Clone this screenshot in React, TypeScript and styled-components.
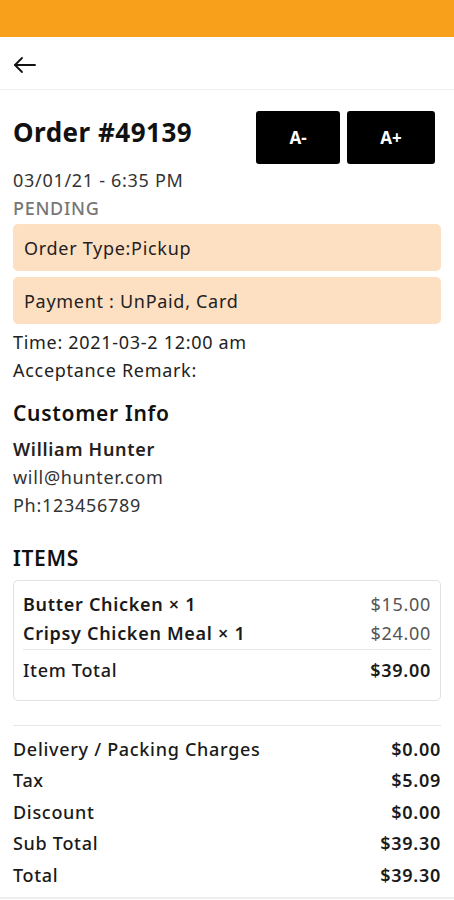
import styled, { createGlobalStyle } from "styled-components"

const GlobalStyle = createGlobalStyle`
  body {
    margin: 0;
    background: #fff;
    font-family: "Noto Sans", "Open Sans", sans-serif;
    color: #1a1a1a;
    letter-spacing: 0.7px;
  }
`

const Page = styled.div`
  width: 454px;
  min-height: 900px;
  display: flex;
  flex-direction: column;
`

const StatusBar = styled.div`
  height: 37px;
  background: #f8a01c;
`

const TopBar = styled.div`
  height: 53px;
  display: flex;
  align-items: center;
  padding: 4px 13px 0;
  box-sizing: border-box;
  border-bottom: 1px solid #f0f0f0;
`

const Content = styled.div`
  padding: 20px 13px 0;
  display: flex;
  flex-direction: column;
`

const HeadRow = styled.div`
  display: flex;
  justify-content: space-between;
  align-items: flex-start;
`

const HeadText = styled.div`
  display: flex;
  flex-direction: column;
`

const OrderTitle = styled.h1`
  margin: 6px 0 0;
  font-size: 26px;
  font-weight: 700;
  line-height: 32px;
  letter-spacing: 0.5px;
  color: #111;
`

const SizeButtons = styled.div`
  display: flex;
  gap: 7px;
  margin: 1px 6px 0 0;
`

const SizeButton = styled.button<{ $w: number }>`
  width: ${p => p.$w}px;
  height: 53px;
  background: #000;
  color: #fff;
  border: none;
  border-radius: 3px;
  font-family: inherit;
  font-size: 17px;
  font-weight: 700;
`

const Line = styled.div<{ $color?: string; $weight?: number; $top?: number }>`
  margin-top: ${p => p.$top || 0}px;
  font-size: 18px;
  line-height: 28px;
  color: ${p => p.$color || "#222"};
  font-weight: ${p => p.$weight || 400};
`

const InfoBox = styled.div<{ $top: number }>`
  margin-top: ${p => p.$top}px;
  height: 47px;
  background: #fddfc2;
  border-radius: 5px;
  display: flex;
  align-items: center;
  padding: 0 11px;
  font-size: 18px;
  color: #222;
`

const SectionTitle = styled.h2<{ $top: number; $bottom: number }>`
  margin: ${p => p.$top}px 0 ${p => p.$bottom}px;
  font-size: 21px;
  font-weight: 600;
  line-height: 28px;
  color: #111;
`

const ItemsCard = styled.div`
  border: 1.5px solid #e2e2e2;
  border-radius: 5px;
  padding: 8px 9px 15px;
  display: flex;
  flex-direction: column;
`

const Row = styled.div<{ $h: number }>`
  display: flex;
  justify-content: space-between;
  align-items: center;
  height: ${p => p.$h}px;
  font-size: 18px;
`

const Label = styled.span<{ $weight?: number }>`
  font-weight: ${p => p.$weight || 500};
  color: #1a1a1a;
`

const Value = styled.span<{ $muted?: boolean }>`
  font-weight: ${p => (p.$muted ? 400 : 600)};
  color: ${p => (p.$muted ? "#555" : "#1a1a1a")};
`

const Divider = styled.hr<{ $m: string }>`
  border: none;
  border-top: 1.5px solid #e6e6e6;
  margin: ${p => p.$m};
`

const Summary = styled.div`
  display: flex;
  flex-direction: column;
`

const BottomEdge = styled.div`
  margin-top: 6px;
  border-top: 2px solid #eee;
`

const items = [
  { name: "Butter Chicken × 1", price: "$15.00" },
  { name: "Cripsy Chicken Meal × 1", price: "$24.00" },
]

const charges = [
  { label: "Delivery / Packing Charges", value: "$0.00" },
  { label: "Tax", value: "$5.09" },
  { label: "Discount", value: "$0.00" },
  { label: "Sub Total", value: "$39.30" },
  { label: "Total", value: "$39.30" },
]

const BackArrow = () => (
  <svg width="24" height="24" viewBox="0 0 24 24" fill="none" stroke="#111" strokeWidth="1.8" strokeLinecap="round" strokeLinejoin="round">
    <path d="M22 12H2" />
    <path d="M9 5L2 12l7 7" />
  </svg>
)

const App = () => {
  return (
    <Page>
      <GlobalStyle />
      <StatusBar />
      <TopBar>
        <BackArrow />
      </TopBar>
      <Content>
        <HeadRow>
          <HeadText>
            <OrderTitle>Order #49139</OrderTitle>
            <Line $color="#333" $top={18}>03/01/21 - 6:35 PM</Line>
            <Line $color="#777" $weight={500}>PENDING</Line>
          </HeadText>
          <SizeButtons>
            <SizeButton $w={84}>A-</SizeButton>
            <SizeButton $w={88}>A+</SizeButton>
          </SizeButtons>
        </HeadRow>
        <InfoBox $top={2}>Order Type:Pickup</InfoBox>
        <InfoBox $top={6}>Payment : UnPaid, Card</InfoBox>
        <Line $top={4}>Time: 2021-03-2 12:00 am</Line>
        <Line>Acceptance Remark:</Line>

        <SectionTitle $top={15} $bottom={8}>Customer Info</SectionTitle>
        <Line $weight={600}>William Hunter</Line>
        <Line $color="#333">will@hunter.com</Line>
        <Line $color="#333">Ph:123456789</Line>

        <SectionTitle $top={25} $bottom={8}>ITEMS</SectionTitle>
        <ItemsCard>
          {items.map(item => (
            <Row $h={29} key={item.name}>
              <Label $weight={600}>{item.name}</Label>
              <Value $muted>{item.price}</Value>
            </Row>
          ))}
          <Divider $m="2px 0 5px" />
          <Row $h={30}>
            <Label>Item Total</Label>
            <Value>$39.00</Value>
          </Row>
        </ItemsCard>

        <Divider $m="24px 0 7px" />
        <Summary>
          {charges.map(c => (
            <Row $h={31.5} key={c.label}>
              <Label>{c.label}</Label>
              <Value>{c.value}</Value>
            </Row>
          ))}
        </Summary>
      </Content>
      <BottomEdge />
    </Page>
  )
}

export default App
